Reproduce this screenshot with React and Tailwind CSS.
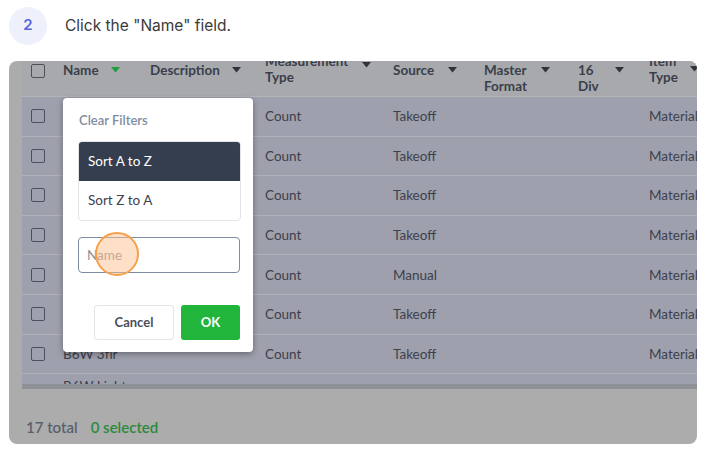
import React from 'react'

// step card: screenshot of a grid with the "Name" column filter open

const ROWS = [
  { name: '', type: 'Count', source: 'Takeoff', item: 'Materials' },
  { name: '', type: 'Count', source: 'Takeoff', item: 'Materials' },
  { name: '', type: 'Count', source: 'Takeoff', item: 'Materials' },
  { name: '', type: 'Count', source: 'Takeoff', item: 'Materials' },
  { name: '', type: 'Count', source: 'Manual', item: 'Materials' },
  { name: '', type: 'Count', source: 'Takeoff', item: 'Materials' },
  { name: 'B6W 3flr', type: 'Count', source: 'Takeoff', item: 'Materials' },
]

function Caret({ green }) {
  return (
    <svg width="9" height="6" viewBox="0 0 9 6" className="shrink-0">
      <path d="M0 0h9L4.5 5.5z" fill={green ? '#1f9d3a' : '#2f333b'} />
    </svg>
  )
}

function Box() {
  return <div className="w-[14px] h-[14px] rounded-[2px] border-[1.5px] border-[#4b505c]" />
}

function Row({ row }) {
  return (
    <div className="flex items-center h-[39.6px] border-b border-[#b1b2b9] bg-[#9ea0ad] text-[13.5px] text-[#3d414c] shrink-0">
      <div className="w-[41px] shrink-0 pl-[9px]"><Box /></div>
      <div className="w-[202px] shrink-0">{row.name}</div>
      <div className="w-[128px] shrink-0">{row.type}</div>
      <div className="w-[256px] shrink-0">{row.source}</div>
      <div className="shrink-0 whitespace-nowrap">{row.item}</div>
    </div>
  )
}

export default function App() {
  return (
    <div className="w-[705px] h-[451px] bg-white relative overflow-hidden" style={{ fontFamily: 'Lato, "Noto Sans", sans-serif' }}>
      {/* step title */}
      <div className="flex items-center h-[50px] pl-[9px] pt-[1px]">
        <div className="w-[38px] h-[38px] rounded-full bg-[#eef0fb] flex items-center justify-center text-[15px] font-semibold text-[#5664e0]" style={{ fontFamily: 'Inter, sans-serif' }}>
          2
        </div>
        <div className="ml-[18px] text-[15.5px] text-[#3a3a3a]" style={{ fontFamily: 'Inter, sans-serif' }}>
          Click the "Name" field.
        </div>
      </div>

      {/* screenshot */}
      <div className="absolute left-[9px] top-[61px] w-[688px] h-[383px] rounded-lg overflow-hidden bg-[#acacac] flex flex-col">
        <div className="pl-[13px] flex flex-col">
          {/* header */}
          <div className="h-[36px] flex items-start bg-[#a8a9ad] border-b border-[#b4b5b9] text-[13.5px] font-bold text-[#3a3f4a] leading-[16px] overflow-hidden">
            <div className="w-[41px] shrink-0 pl-[9px] pt-[3px]"><Box /></div>
            <div className="w-[87px] shrink-0 flex items-center gap-[12px] pt-[1px]">Name <Caret green /></div>
            <div className="w-[115px] shrink-0 flex items-center gap-[12px] pt-[1px]">Description <Caret /></div>
            <div className="w-[128px] shrink-0 flex items-center gap-[14px] -mt-[8px]">
              <span>Measurement<br />Type</span>
              <span className="-mt-[8px]"><Caret /></span>
            </div>
            <div className="w-[91px] shrink-0 flex items-center gap-[14px] pt-[1px]">Source <Caret /></div>
            <div className="w-[94px] shrink-0 flex items-start gap-[14px] pt-[1px]">
              <span>Master<br />Format</span>
              <span className="pt-[5px]"><Caret /></span>
            </div>
            <div className="w-[71px] shrink-0 flex items-start gap-[16px] pt-[1px]">
              <span>16<br />Div</span>
              <span className="pt-[5px]"><Caret /></span>
            </div>
            <div className="shrink-0 flex items-start gap-[12px] -mt-[8px]">
              <span>Item<br />Type</span>
              <span className="pt-[13px]"><Caret /></span>
            </div>
          </div>

          {ROWS.map((r, i) => <Row key={i} row={r} />)}

          {/* partially visible row */}
          <div className="h-[10px] bg-[#9ea0ad] overflow-hidden text-[13.5px] text-[#3d414c] pl-[41px] leading-[20px]">
            <span className="relative top-[2px]">B6W Light</span>
          </div>
          <div className="h-[5px] bg-[#8e9196]" />
        </div>

        {/* footer */}
        <div className="mt-auto pb-[6px] pl-[17px] flex gap-[13px] text-[15px] font-semibold">
          <span className="text-[#5a616e]">17 total</span>
          <span className="text-[#2b8a3e]">0 selected</span>
        </div>

        {/* filter popup */}
        <div className="absolute left-[54px] top-[37px] w-[190px] h-[254px] bg-white rounded-[4px] shadow-[0_2px_6px_rgba(0,0,0,0.35)] px-[15px]">
          <div className="pt-[13px] pl-[1px] h-[43px] text-[13px] font-semibold text-[#7f8ca1]">Clear Filters</div>
          <div className="w-[163px] border border-[#e2e4e8] rounded-[4px] overflow-hidden text-[13.5px]">
            <div className="h-[39px] bg-[#353e4f] text-white flex items-center pl-[9px]">Sort A to Z</div>
            <div className="h-[39px] text-[#3d414c] flex items-center pl-[9px]">Sort Z to A</div>
          </div>
          <div className="mt-[16px] h-[36px] w-[162px] border-[1.5px] border-[#7f8ba0] rounded-[4px] flex items-center pl-[8px] text-[13.5px] text-[#8a8f99]">
            Name
          </div>
          <div className="mt-[32px] w-[162px] flex justify-end gap-[7px]">
            <div className="w-[80px] h-[35px] border border-[#e3e5e8] rounded-[3px] flex items-center justify-center text-[13px] font-bold text-[#4a4f5a]">Cancel</div>
            <div className="w-[59px] h-[35px] bg-[#21b53b] rounded-[3px] flex items-center justify-center text-[13px] font-bold text-white">OK</div>
          </div>

          {/* click marker */}
          <div className="absolute left-[32px] top-[134px] w-[44px] h-[44px] rounded-full bg-[#fdbf8f]/50 border-2 border-[#f7a04a]" />
        </div>
      </div>
    </div>
  )
}
